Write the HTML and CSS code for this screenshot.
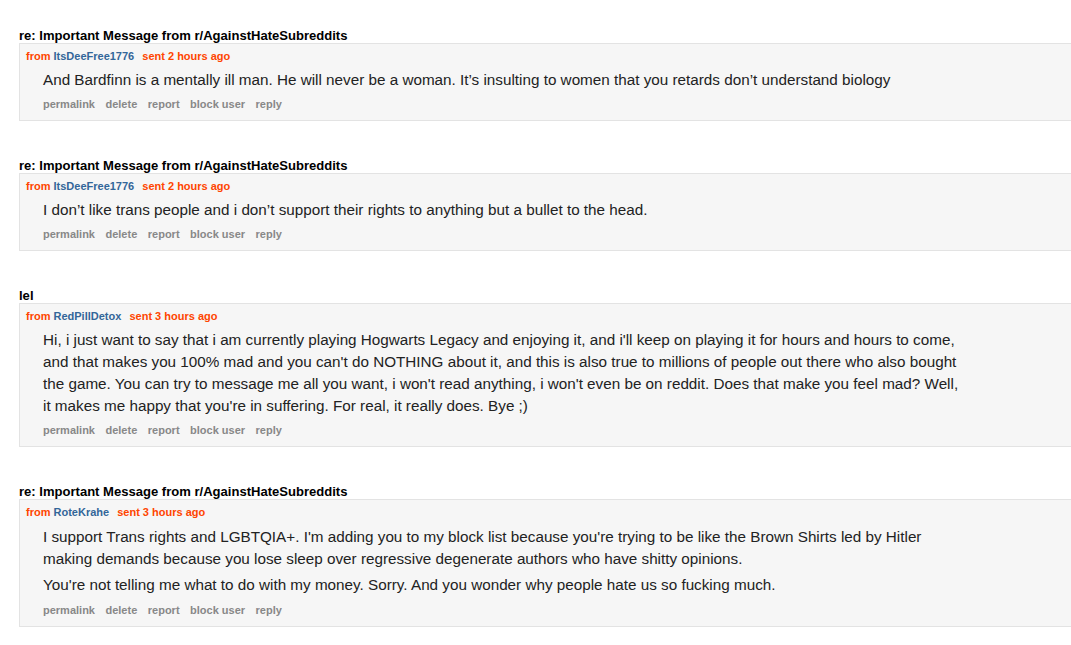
FILE: index.html
```html
<!DOCTYPE html>
<html>
<head>
<meta charset="utf-8">
<link rel="stylesheet" href="styles.css">
</head>
<body>
<div class="inbox">
  <div class="msg">
    <div class="subject">re: Important Message from r/AgainstHateSubreddits</div>
    <div class="box">
      <div class="tagline">from <a class="author">ItsDeeFree1776</a> <span class="sent">sent 2 hours ago</span></div>
      <div class="md">
        <p>And Bardfinn is a mentally ill man. He will never be a woman. It’s insulting to women that you retards don’t understand biology</p>
      </div>
      <ul class="buttons"><li>permalink</li><li>delete</li><li>report</li><li>block user</li><li>reply</li></ul>
    </div>
  </div>
  <div class="msg">
    <div class="subject">re: Important Message from r/AgainstHateSubreddits</div>
    <div class="box">
      <div class="tagline">from <a class="author">ItsDeeFree1776</a> <span class="sent">sent 2 hours ago</span></div>
      <div class="md">
        <p>I don’t like trans people and i don’t support their rights to anything but a bullet to the head.</p>
      </div>
      <ul class="buttons"><li>permalink</li><li>delete</li><li>report</li><li>block user</li><li>reply</li></ul>
    </div>
  </div>
  <div class="msg">
    <div class="subject">lel</div>
    <div class="box">
      <div class="tagline">from <a class="author">RedPillDetox</a> <span class="sent">sent 3 hours ago</span></div>
      <div class="md">
        <p>Hi, i just want to say that i am currently playing Hogwarts Legacy and enjoying it, and i'll keep on playing it for hours and hours to come, and that makes you 100% mad and you can't do NOTHING about it, and this is also true to millions of people out there who also bought the game. You can try to message me all you want, i won't read anything, i won't even be on reddit. Does that make you feel mad? Well, it makes me happy that you're in suffering. For real, it really does. Bye ;)</p>
      </div>
      <ul class="buttons"><li>permalink</li><li>delete</li><li>report</li><li>block user</li><li>reply</li></ul>
    </div>
  </div>
  <div class="msg">
    <div class="subject">re: Important Message from r/AgainstHateSubreddits</div>
    <div class="box">
      <div class="tagline">from <a class="author">RoteKrahe</a> <span class="sent">sent 3 hours ago</span></div>
      <div class="md multi">
        <p>I support Trans rights and LGBTQIA+. I'm adding you to my block list because you're trying to be like the Brown Shirts led by Hitler making demands because you lose sleep over regressive degenerate authors who have shitty opinions.</p>
        <p>You're not telling me what to do with my money. Sorry. And you wonder why people hate us so fucking much.</p>
      </div>
      <ul class="buttons"><li>permalink</li><li>delete</li><li>report</li><li>block user</li><li>reply</li></ul>
    </div>
  </div>
</div>
</body>
</html>
```

FILE: styles.css
```css
html, body {
  margin: 0;
  padding: 0;
  background: #fff;
}
body {
  font-family: "Liberation Sans", Arial, sans-serif;
  overflow: hidden;
}
.inbox {
  padding: 29px 0 0 19px;
}
.msg {
  margin-bottom: 38px;
}
.subject {
  font-weight: bold;
  font-size: 13.05px;
  line-height: 14px;
  color: #000;
}
.box {
  background: #f6f6f6;
  border: 1px solid #e3e3e3;
  border-right: none;
  padding: 5px 0 9px 6px;
}
.tagline {
  font-size: 11px;
  line-height: 14px;
  font-weight: bold;
  color: #ff4500;
}
.tagline .author {
  color: #369;
  margin-right: 5px;
}
.tagline .sent {
  color: #ff4500;
}
.md {
  margin: 6px 0 0 17px;
  max-width: 924px;
  font-size: 15.25px;
  line-height: 22px;
  color: #222;
}
.md.multi {
  padding: 1px 0;
}
.md p {
  margin: 0;
}
.md p + p {
  margin-top: 4px;
}
.buttons {
  list-style: none;
  margin: 6px 0 0 17px;
  padding: 0;
  display: flex;
  gap: 10.5px;
  font-size: 11px;
  line-height: 14px;
  font-weight: bold;
  color: #888;
}
```
